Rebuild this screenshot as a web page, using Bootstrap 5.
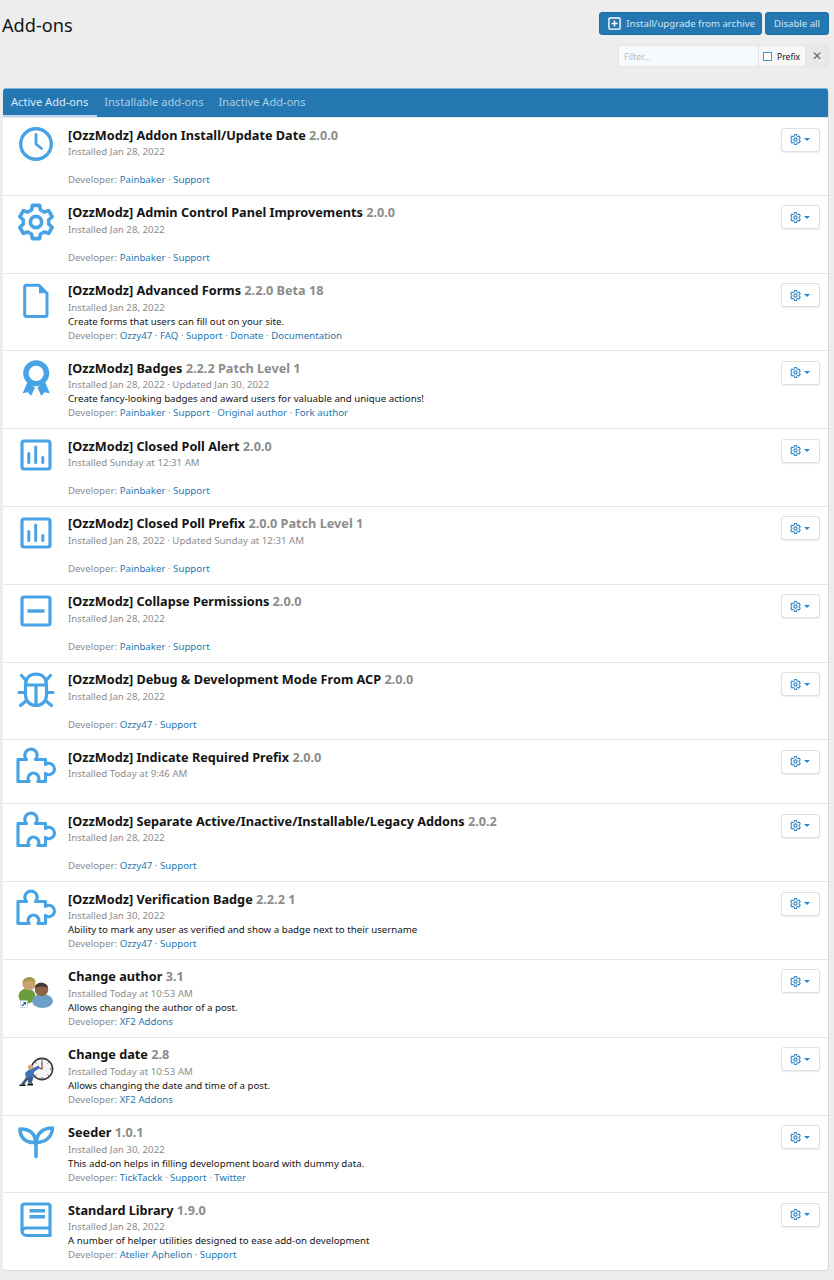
<!DOCTYPE html>
<html lang="en">
<head>
    <meta charset="UTF-8">
    <meta name="viewport" content="width=device-width, initial-scale=1.0">
    <title>Add-ons</title>
    <link href="https://cdn.jsdelivr.net/npm/bootstrap@5.3.0/dist/css/bootstrap.min.css" rel="stylesheet">
    <style>
        body { background: #ededed; font-family: "Noto Sans", "Open Sans", sans-serif; color: #141414; font-size: 9.7px; }
        a { color: #2577b1; text-decoration: none; }
        .page-wrap { padding: 12px 5px 0 2px; }
        .page-head { height: 33px; }
        .page-title { font-size: 18.2px; font-weight: 400; line-height: 26px; margin: 0; }
        .head-actions { gap: 3px; }
        .btn-xf { background: #2577b1; border: 1px solid #1f6da5; color: #d4e6f3; font-size: 9.6px; line-height: 15px; padding: 3px 8px; border-radius: 3px; height: 23px; }
        .btn-xf.with-icon { padding: 3px 6px 3px 7px; }
        .btn-xf svg { width: 13px; height: 13px; margin: 0 5px 0 1px; vertical-align: -3px; }
        .filter-group { width: 211px; height: 22px; }
        .filter-input { flex: 1; background: #f5fafe; border: 1px solid #e4e4e4; border-right: 0; border-radius: 3px 0 0 3px; font-size: 8.8px; color: #b9b9b9; padding: 4px 5px 2px; line-height: 14px; }
        .filter-prefix { width: 47px; background: #f7f7f7; border: 1px solid #e4e4e4; border-right: 0; font-size: 8.6px; padding: 2px 0 0 4px; }
        .filter-check { width: 9px; height: 9px; border: 1px solid #3f97d8; background: #fff; margin: -1px 5px 0 0; flex: none; }
        .filter-x { width: 24px; background: #e8e8e8; border: 1px solid #e4e4e4; border-radius: 0 3px 3px 0; color: #666; font-size: 12px; }
        .addon-block { margin-top: 21px; margin-left: 1px; border-radius: 4px; background: #fff; border: 1px solid #d8d8d8; border-width: 0 1px 1px 0; overflow: hidden; }
        .tab-bar { background: #2577b1; height: 29px; border-top: 1px solid #7fb6dc; }
        .tab-link { color: #a9cde6; font-size: 11.1px; line-height: 26px; padding: 0 8px; height: 28px; display: block; border-bottom: 2px solid transparent; margin-right: -1px; }
        .tab-link.on { color: #dbeaf5; border-bottom-color: #b7d6ec; padding-right: 9px; }
        .addon-row { min-height: 64px; height: 77.8px; border-top: 1px solid #e6e6e6; padding: 6.5px 8px 0 10.5px; }
        .addon-row:first-of-type { border-top: 0; }
        .addon-row.short-row { height: 64px; }
        .addon-icon { width: 44px; height: 44px; margin: -2.5px 10.5px 0 0; flex: none; color: #47a3e6; }
        .addon-icon svg { width: 44px; height: 44px; display: block; }
        .addon-title { font-size: 12.7px; font-weight: 700; line-height: 20.5px; white-space: nowrap; }
        .addon-ver { color: #8c8c8c; }
        .addon-line { line-height: 14px; white-space: nowrap; height: 14px; }
        .addon-muted { color: #8c8c8c; }
        .gear-btn { width: 39px; height: 24px; margin-top: 3px; background: #fff; border: 1px solid #dfdfdf; border-radius: 3px; box-shadow: 0 1px 1px rgba(0,0,0,.08); color: #2f86c8; padding-right: 2px; }
        .gear-btn svg { width: 13px; height: 13px; }
        .gear-caret { width: 0; height: 0; border: 3.2px solid transparent; border-top: 3.6px solid #2f86c8; border-bottom: 0; margin-left: 2px; }
    </style>
</head>
<body>
    <svg width="0" height="0" class="position-absolute">
        <defs>
            <g id="cog-tooth"><polyline points="15.75,11.17 17.55,9.78 18.47,5.37 25.53,5.37 26.45,9.78 28.25,11.17"/></g>
            <symbol id="i-cog" viewBox="0 0 44 44">
                <g fill="none" stroke="currentColor" stroke-width="3.6" stroke-linejoin="round">
                    <use href="#cog-tooth"/>
                    <use href="#cog-tooth" transform="rotate(60 22 22)"/>
                    <use href="#cog-tooth" transform="rotate(120 22 22)"/>
                    <use href="#cog-tooth" transform="rotate(180 22 22)"/>
                    <use href="#cog-tooth" transform="rotate(240 22 22)"/>
                    <use href="#cog-tooth" transform="rotate(300 22 22)"/>
                    <circle cx="22" cy="22" r="5.6"/>
                </g>
            </symbol>
            <symbol id="i-clock" viewBox="0 0 44 44">
                <circle cx="22" cy="22" r="15.3" fill="none" stroke="currentColor" stroke-width="3.4"/>
                <path d="M22 12.5V22L27.5 26.5" fill="none" stroke="currentColor" stroke-width="2.8" stroke-linecap="round" stroke-linejoin="round"/>
            </symbol>
            <symbol id="i-file" viewBox="0 0 44 44">
                <path d="M12.5 7.2H25L33 15.2V36.7a1.8 1.8 0 0 1-1.8 1.8H12.5a1.8 1.8 0 0 1-1.8-1.8V9a1.8 1.8 0 0 1 1.8-1.8z" fill="none" stroke="currentColor" stroke-width="3" stroke-linejoin="round"/>
                <path d="M25 7.2V15.2H33z" fill="currentColor"/>
            </symbol>
            <symbol id="i-award" viewBox="0 0 44 44">
                <circle cx="22.2" cy="18.3" r="10.3" fill="none" stroke="currentColor" stroke-width="5.4"/>
                <path d="M13.5 27L8.7 38.3L14 37.3L17 41L21 32.5zM31 27L35.8 38.3L30.4 37.3L27.4 41L23.4 32.5z" fill="currentColor"/>
            </symbol>
            <symbol id="i-chart" viewBox="0 0 44 44">
                <rect x="8" y="8" width="28" height="28" rx="2" fill="none" stroke="currentColor" stroke-width="3.2"/>
                <path d="M14.8 20.5V29.5M21.7 14V29.5M28.8 24.5V29.5" fill="none" stroke="currentColor" stroke-width="3" stroke-linecap="round"/>
            </symbol>
            <symbol id="i-minus" viewBox="0 0 44 44">
                <rect x="8" y="8" width="28" height="28" rx="2" fill="none" stroke="currentColor" stroke-width="3.2"/>
                <path d="M13.5 22H30.5" fill="none" stroke="currentColor" stroke-width="3.4"/>
            </symbol>
            <symbol id="i-bug" viewBox="0 0 44 44">
                <g fill="none" stroke="currentColor" stroke-width="3.2" stroke-linecap="round" stroke-linejoin="round">
                    <path d="M11.5 18C11.5 11 16 7.2 22 7.2S32.5 11 32.5 18V28C32.5 34 28 38.5 22 38.5S11.5 34 11.5 28Z"/>
                    <path d="M11.5 18H32.5M22 19V38M7.5 8.5L12.5 14M36.5 8.5L31.5 14M5 25.5H11M39 25.5H33M6.5 38.5L12.5 33.5M37.5 38.5L31.5 33.5"/>
                </g>
            </symbol>
            <symbol id="i-puzzle" viewBox="0 0 44 44">
                <path d="M4 37.5V15.5H12.5A6.2 6.2 0 1 1 21.5 15.5H31.5V20.5A5.6 5.6 0 1 1 31.5 29.5V37.5H24A5.4 5.4 0 1 0 15 37.5Z" fill="none" stroke="currentColor" stroke-width="3.2" stroke-linejoin="round"/>
            </symbol>
            <symbol id="i-seed" viewBox="0 0 44 44">
                <g fill="none" stroke="currentColor" stroke-width="3.6" stroke-linecap="round" stroke-linejoin="round">
                    <path d="M22 36.5V22.5"/>
                    <path d="M6 9C14.5 8.8 21.5 12.5 21.5 22.5C12 23 6 18 6 9Z"/>
                    <path d="M38.5 8C38 16.5 32.5 22 22.5 22.5C22.5 13 29.5 8 38.5 8Z"/>
                </g>
            </symbol>
            <symbol id="i-book" viewBox="0 0 44 44">
                <g fill="none" stroke="currentColor" stroke-width="3.2" stroke-linejoin="round">
                    <path d="M36 7H10.5A2.5 2.5 0 0 0 8 9.5V34A4.5 4.5 0 0 0 12.5 38.5H37.5"/>
                    <path d="M36 7V31H12.5A4.5 4.5 0 0 0 8 34"/>
                    <path d="M36 31V38"/>
                </g>
                <path d="M15.5 13.7H31M15.5 19.7H31" fill="none" stroke="currentColor" stroke-width="3.4"/>
            </symbol>
            <symbol id="i-users" viewBox="0 0 44 44">
                <ellipse cx="13" cy="32" rx="8.5" ry="7.5" fill="#6c9c3c"/>
                <circle cx="15" cy="20" r="6.5" fill="#c9a26d"/>
                <path d="M8.5 19C8.5 14 13 13 16 13C19 13 21.5 15.5 21.5 18C18 16.5 13 16.5 8.5 19Z" fill="#a79a50"/>
                <ellipse cx="28.5" cy="37" rx="10.5" ry="7" fill="#6d9fca"/>
                <circle cx="27.5" cy="25.5" r="6.8" fill="#8d6444"/>
                <path d="M20.7 24C21 20 25 18.7 27.5 18.7C30.5 18.7 34 21 34 24C30 22 25 22 20.7 24Z" fill="#3f3a36"/>
                <rect x="6.5" y="36.5" width="7" height="7" fill="#fff" stroke="#b8c4d0" stroke-width=".6"/>
                <path d="M8 42L11.5 38.5M9.5 38.5H11.5V40.5" fill="none" stroke="#1e5fa8" stroke-width="1.2"/>
            </symbol>
            <symbol id="i-clockman" viewBox="0 0 44 44">
                <circle cx="28" cy="27" r="10.6" fill="#f4f4f4" stroke="#3a3a3a" stroke-width="1.6"/>
                <path d="M28 19.5V27L22.5 25" fill="none" stroke="#8a3030" stroke-width="1.1"/>
                <path d="M28 17.5v1.6M28 35v1.6M18.5 27h1.6M36 27h1.6M21.3 20.3l1.1 1.1M33.6 32.6l1.1 1.1M34.7 20.3l-1.1 1.1M22.4 32.6l-1.1 1.1" stroke="#444" stroke-width="1"/>
                <path d="M11 31L15 27.5L25 23.5L25.5 26L20 30L19.5 36L12 36Z" fill="#3f73b8"/>
                <circle cx="16.5" cy="25" r="2.6" fill="#d8a878"/>
                <path d="M12 35.5L19.5 35.5L17.5 41.5L14.5 41L13.5 38L10 43L7 42Z" fill="#3d5c86"/>
                <path d="M5.5 42.5H11.5V44H5.5ZM13.5 41.5H19V43.5H13.5Z" fill="#111"/>
            </symbol>
        </defs>
    </svg>

    <div class="page-wrap">
        <div class="page-head d-flex justify-content-between align-items-start">
            <h1 class="page-title">Add-ons</h1>
            <div class="d-flex head-actions">
                <a class="btn-xf with-icon d-block" href="#"><svg viewBox="0 0 14 14"><rect x="1" y="1" width="12" height="12" rx="1" fill="none" stroke="#fff" stroke-width="1.5"/><path d="M7 3.7V10.3M3.7 7H10.3" stroke="#fff" stroke-width="1.6"/></svg>Install/upgrade from archive</a>
                <a class="btn-xf d-block" href="#">Disable all</a>
            </div>
        </div>
        <div class="d-flex justify-content-end">
            <div class="filter-group d-flex">
                <div class="filter-input">Filter...</div>
                <div class="filter-prefix d-flex align-items-center"><span class="filter-check"></span>Prefix</div>
                <div class="filter-x d-flex align-items-center justify-content-center">✕</div>
            </div>
        </div>

        <div class="addon-block">
            <div class="tab-bar d-flex">
                <a class="tab-link on" href="#">Active Add-ons</a>
                <a class="tab-link" href="#">Installable add-ons</a>
                <a class="tab-link" href="#">Inactive Add-ons</a>
            </div>

            <div class="addon-row d-flex">
                <div class="addon-icon"><svg><use href="#i-clock"/></svg></div>
                <div class="flex-grow-1">
                    <div class="addon-title">[OzzModz] Addon Install/Update Date <span class="addon-ver">2.0.0</span></div>
                    <div class="addon-line addon-muted">Installed Jan 28, 2022</div>
                    <div class="addon-line"></div>
                    <div class="addon-line addon-muted">Developer: <a href="#">Painbaker</a> · <a href="#">Support</a></div>
                </div>
                <div class="gear-btn d-flex align-items-center justify-content-center"><svg><use href="#i-cog"/></svg><span class="gear-caret"></span></div>
            </div>

            <div class="addon-row d-flex">
                <div class="addon-icon"><svg><use href="#i-cog"/></svg></div>
                <div class="flex-grow-1">
                    <div class="addon-title">[OzzModz] Admin Control Panel Improvements <span class="addon-ver">2.0.0</span></div>
                    <div class="addon-line addon-muted">Installed Jan 28, 2022</div>
                    <div class="addon-line"></div>
                    <div class="addon-line addon-muted">Developer: <a href="#">Painbaker</a> · <a href="#">Support</a></div>
                </div>
                <div class="gear-btn d-flex align-items-center justify-content-center"><svg><use href="#i-cog"/></svg><span class="gear-caret"></span></div>
            </div>

            <div class="addon-row d-flex">
                <div class="addon-icon"><svg><use href="#i-file"/></svg></div>
                <div class="flex-grow-1">
                    <div class="addon-title">[OzzModz] Advanced Forms <span class="addon-ver">2.2.0 Beta 18</span></div>
                    <div class="addon-line addon-muted">Installed Jan 28, 2022</div>
                    <div class="addon-line">Create forms that users can fill out on your site.</div>
                    <div class="addon-line addon-muted">Developer: <a href="#">Ozzy47</a> · <a href="#">FAQ</a> · <a href="#">Support</a> · <a href="#">Donate</a> · <a href="#">Documentation</a></div>
                </div>
                <div class="gear-btn d-flex align-items-center justify-content-center"><svg><use href="#i-cog"/></svg><span class="gear-caret"></span></div>
            </div>

            <div class="addon-row d-flex">
                <div class="addon-icon"><svg><use href="#i-award"/></svg></div>
                <div class="flex-grow-1">
                    <div class="addon-title">[OzzModz] Badges <span class="addon-ver">2.2.2 Patch Level 1</span></div>
                    <div class="addon-line addon-muted">Installed Jan 28, 2022 · Updated Jan 30, 2022</div>
                    <div class="addon-line">Create fancy-looking badges and award users for valuable and unique actions!</div>
                    <div class="addon-line addon-muted">Developer: <a href="#">Painbaker</a> · <a href="#">Support</a> · <a href="#">Original author</a> · <a href="#">Fork author</a></div>
                </div>
                <div class="gear-btn d-flex align-items-center justify-content-center"><svg><use href="#i-cog"/></svg><span class="gear-caret"></span></div>
            </div>

            <div class="addon-row d-flex">
                <div class="addon-icon"><svg><use href="#i-chart"/></svg></div>
                <div class="flex-grow-1">
                    <div class="addon-title">[OzzModz] Closed Poll Alert <span class="addon-ver">2.0.0</span></div>
                    <div class="addon-line addon-muted">Installed Sunday at 12:31 AM</div>
                    <div class="addon-line"></div>
                    <div class="addon-line addon-muted">Developer: <a href="#">Painbaker</a> · <a href="#">Support</a></div>
                </div>
                <div class="gear-btn d-flex align-items-center justify-content-center"><svg><use href="#i-cog"/></svg><span class="gear-caret"></span></div>
            </div>

            <div class="addon-row d-flex">
                <div class="addon-icon"><svg><use href="#i-chart"/></svg></div>
                <div class="flex-grow-1">
                    <div class="addon-title">[OzzModz] Closed Poll Prefix <span class="addon-ver">2.0.0 Patch Level 1</span></div>
                    <div class="addon-line addon-muted">Installed Jan 28, 2022 · Updated Sunday at 12:31 AM</div>
                    <div class="addon-line"></div>
                    <div class="addon-line addon-muted">Developer: <a href="#">Painbaker</a> · <a href="#">Support</a></div>
                </div>
                <div class="gear-btn d-flex align-items-center justify-content-center"><svg><use href="#i-cog"/></svg><span class="gear-caret"></span></div>
            </div>

            <div class="addon-row d-flex">
                <div class="addon-icon"><svg><use href="#i-minus"/></svg></div>
                <div class="flex-grow-1">
                    <div class="addon-title">[OzzModz] Collapse Permissions <span class="addon-ver">2.0.0</span></div>
                    <div class="addon-line addon-muted">Installed Jan 28, 2022</div>
                    <div class="addon-line"></div>
                    <div class="addon-line addon-muted">Developer: <a href="#">Painbaker</a> · <a href="#">Support</a></div>
                </div>
                <div class="gear-btn d-flex align-items-center justify-content-center"><svg><use href="#i-cog"/></svg><span class="gear-caret"></span></div>
            </div>

            <div class="addon-row d-flex">
                <div class="addon-icon"><svg><use href="#i-bug"/></svg></div>
                <div class="flex-grow-1">
                    <div class="addon-title">[OzzModz] Debug &amp; Development Mode From ACP <span class="addon-ver">2.0.0</span></div>
                    <div class="addon-line addon-muted">Installed Jan 28, 2022</div>
                    <div class="addon-line"></div>
                    <div class="addon-line addon-muted">Developer: <a href="#">Ozzy47</a> · <a href="#">Support</a></div>
                </div>
                <div class="gear-btn d-flex align-items-center justify-content-center"><svg><use href="#i-cog"/></svg><span class="gear-caret"></span></div>
            </div>

            <div class="addon-row short-row d-flex">
                <div class="addon-icon"><svg><use href="#i-puzzle"/></svg></div>
                <div class="flex-grow-1">
                    <div class="addon-title">[OzzModz] Indicate Required Prefix <span class="addon-ver">2.0.0</span></div>
                    <div class="addon-line addon-muted">Installed Today at 9:46 AM</div>
                </div>
                <div class="gear-btn d-flex align-items-center justify-content-center"><svg><use href="#i-cog"/></svg><span class="gear-caret"></span></div>
            </div>

            <div class="addon-row d-flex">
                <div class="addon-icon"><svg><use href="#i-puzzle"/></svg></div>
                <div class="flex-grow-1">
                    <div class="addon-title">[OzzModz] Separate Active/Inactive/Installable/Legacy Addons <span class="addon-ver">2.0.2</span></div>
                    <div class="addon-line addon-muted">Installed Jan 28, 2022</div>
                    <div class="addon-line"></div>
                    <div class="addon-line addon-muted">Developer: <a href="#">Ozzy47</a> · <a href="#">Support</a></div>
                </div>
                <div class="gear-btn d-flex align-items-center justify-content-center"><svg><use href="#i-cog"/></svg><span class="gear-caret"></span></div>
            </div>

            <div class="addon-row d-flex">
                <div class="addon-icon"><svg><use href="#i-puzzle"/></svg></div>
                <div class="flex-grow-1">
                    <div class="addon-title">[OzzModz] Verification Badge <span class="addon-ver">2.2.2 1</span></div>
                    <div class="addon-line addon-muted">Installed Jan 30, 2022</div>
                    <div class="addon-line">Ability to mark any user as verified and show a badge next to their username</div>
                    <div class="addon-line addon-muted">Developer: <a href="#">Ozzy47</a> · <a href="#">Support</a></div>
                </div>
                <div class="gear-btn d-flex align-items-center justify-content-center"><svg><use href="#i-cog"/></svg><span class="gear-caret"></span></div>
            </div>

            <div class="addon-row d-flex">
                <div class="addon-icon"><svg><use href="#i-users"/></svg></div>
                <div class="flex-grow-1">
                    <div class="addon-title">Change author <span class="addon-ver">3.1</span></div>
                    <div class="addon-line addon-muted">Installed Today at 10:53 AM</div>
                    <div class="addon-line">Allows changing the author of a post.</div>
                    <div class="addon-line addon-muted">Developer: <a href="#">XF2 Addons</a></div>
                </div>
                <div class="gear-btn d-flex align-items-center justify-content-center"><svg><use href="#i-cog"/></svg><span class="gear-caret"></span></div>
            </div>

            <div class="addon-row d-flex">
                <div class="addon-icon"><svg><use href="#i-clockman"/></svg></div>
                <div class="flex-grow-1">
                    <div class="addon-title">Change date <span class="addon-ver">2.8</span></div>
                    <div class="addon-line addon-muted">Installed Today at 10:53 AM</div>
                    <div class="addon-line">Allows changing the date and time of a post.</div>
                    <div class="addon-line addon-muted">Developer: <a href="#">XF2 Addons</a></div>
                </div>
                <div class="gear-btn d-flex align-items-center justify-content-center"><svg><use href="#i-cog"/></svg><span class="gear-caret"></span></div>
            </div>

            <div class="addon-row d-flex">
                <div class="addon-icon"><svg><use href="#i-seed"/></svg></div>
                <div class="flex-grow-1">
                    <div class="addon-title">Seeder <span class="addon-ver">1.0.1</span></div>
                    <div class="addon-line addon-muted">Installed Jan 30, 2022</div>
                    <div class="addon-line">This add-on helps in filling development board with dummy data.</div>
                    <div class="addon-line addon-muted">Developer: <a href="#">TickTackk</a> · <a href="#">Support</a> · <a href="#">Twitter</a></div>
                </div>
                <div class="gear-btn d-flex align-items-center justify-content-center"><svg><use href="#i-cog"/></svg><span class="gear-caret"></span></div>
            </div>

            <div class="addon-row d-flex">
                <div class="addon-icon"><svg><use href="#i-book"/></svg></div>
                <div class="flex-grow-1">
                    <div class="addon-title">Standard Library <span class="addon-ver">1.9.0</span></div>
                    <div class="addon-line addon-muted">Installed Jan 28, 2022</div>
                    <div class="addon-line">A number of helper utilities designed to ease add-on development</div>
                    <div class="addon-line addon-muted">Developer: <a href="#">Atelier Aphelion</a> · <a href="#">Support</a></div>
                </div>
                <div class="gear-btn d-flex align-items-center justify-content-center"><svg><use href="#i-cog"/></svg><span class="gear-caret"></span></div>
            </div>
        </div>
    </div>

    <script src="https://cdn.jsdelivr.net/npm/bootstrap@5.3.0/dist/js/bootstrap.bundle.min.js"></script>
</body>
</html>
